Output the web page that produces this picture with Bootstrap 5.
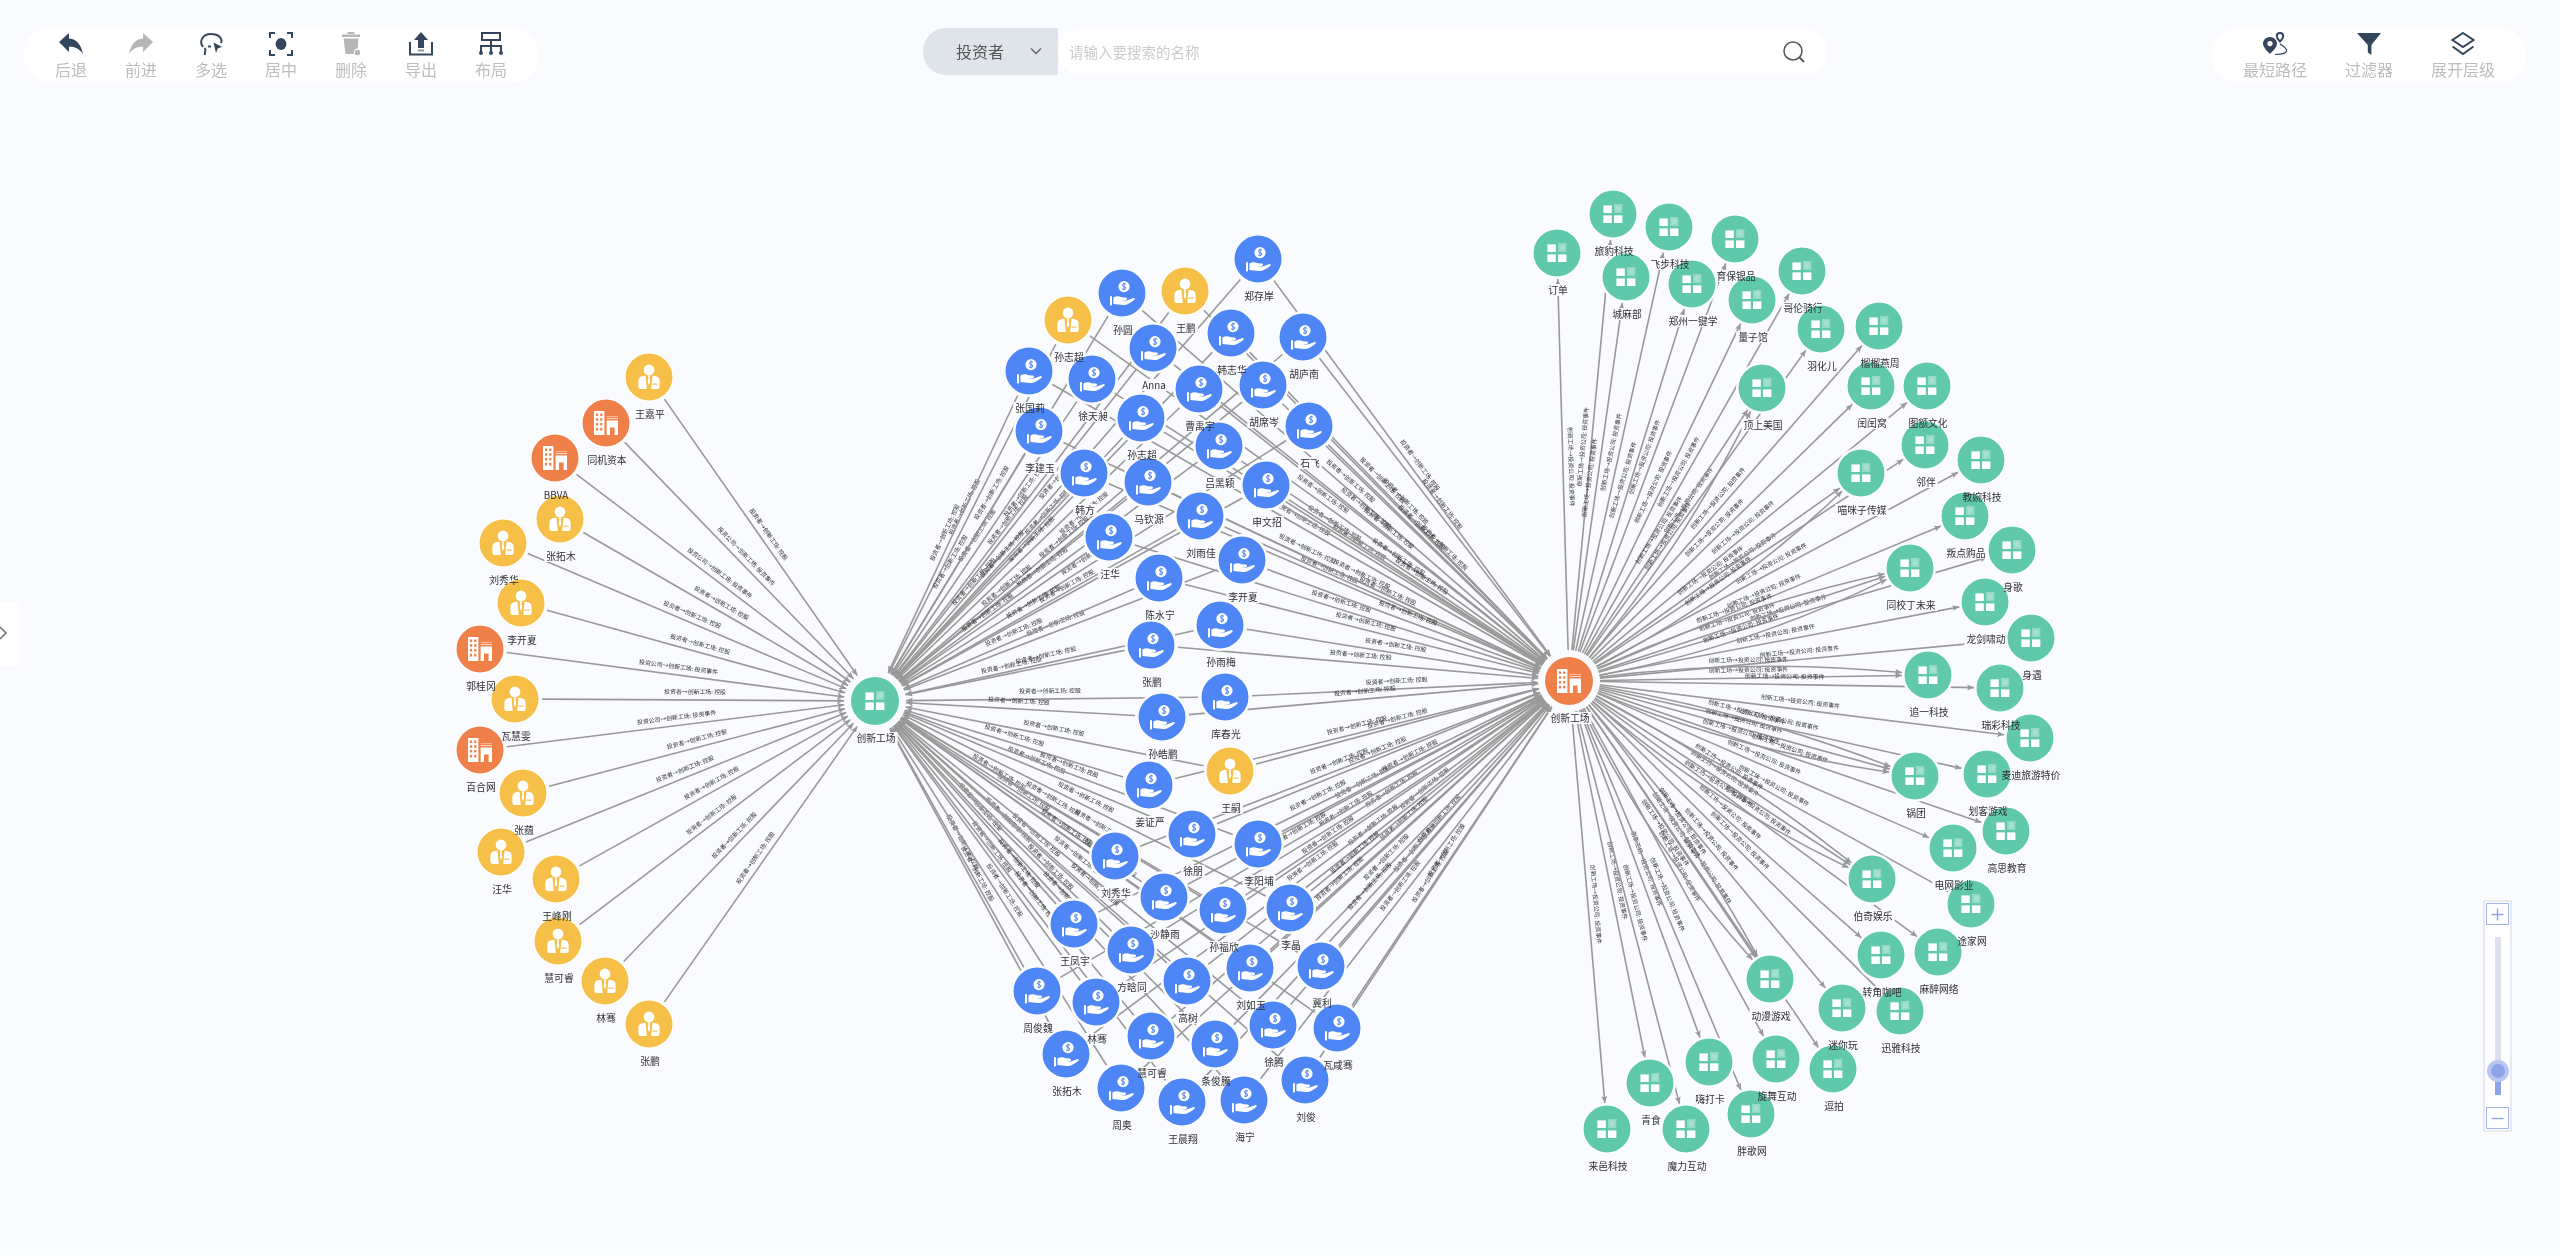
<!DOCTYPE html>
<html lang="zh-CN">

<head>
    <meta charset="UTF-8">
    <meta name="viewport" content="width=device-width, initial-scale=1.0">
    <title>图谱</title>
    <link href="https://cdn.jsdelivr.net/npm/bootstrap@5.3.0/dist/css/bootstrap.min.css" rel="stylesheet">
    <style>
        html, body { height: 100%; }
        body {
            background: #f9fbff;
            overflow: hidden;
            font-family: "Noto Sans CJK SC", "Liberation Sans", sans-serif;
        }

        .page-wrap { position: relative; width: 2560px; height: 1255px; filter: blur(.6px); }

        .graph-canvas { position: absolute; left: 0; top: 0; width: 2560px; height: 1255px; }
        .node-name { font-size: 9.8px; fill: #303030; text-anchor: middle; }
        .edge-text { font-size: 5.9px; fill: #303030; text-anchor: middle; }
        .edge-line { fill: none; stroke: #999; stroke-width: 1.6; }
        .node-halo { fill: #f9fbff; }
        .name-mask { fill: #f9fbff; }

        .top-bar { position: relative; z-index: 2; padding: 27px 33px 0 23px; }
        .tool-pill { height: 56px; background: #fff; border-radius: 28px; }
        .tool-pill-left { padding: 0 13px; }
        .tool-pill-right { padding: 0 17px; }
        .tool-item { width: 70px; padding-top: 5px; color: #bdbdbd; font-size: 16px; line-height: 20px; }
        .tool-pill-right .tool-item { width: 94px; }
        .tool-item svg { display: block; width: 24px; height: 24px; margin-bottom: 3px; }
        .ic-on { fill: #34465c; stroke: none; }
        .ic-off { fill: #b6b6b6; stroke: none; }
        .ic-line { fill: none; stroke: #34465c; stroke-width: 2; }

        .search-box { width: 904px; height: 47px; margin-top: 1px; }
        .search-type {
            width: 135px;
            background: #dfe3ea;
            border-radius: 23px 0 0 23px;
            color: #555;
            font-size: 16px;
            padding-left: 33px;
            padding-bottom: 2px;
        }
        .search-type svg { width: 12px; height: 12px; margin-left: 26px; }
        .search-main { background: #fff; border-radius: 23px; padding: 0 21px 0 11px; }
        .search-main .form-control {
            border: 0;
            background: transparent;
            box-shadow: none;
            padding: 0;
            font-size: 14.5px;
        }
        .search-main .form-control::placeholder { color: #cbcbcb; }
        .search-main svg { width: 24px; height: 24px; flex: none; }

        .side-handle {
            position: absolute;
            left: 0;
            top: 602px;
            width: 20px;
            height: 64px;
            background: #fff;
        }
        .side-handle svg { width: 8px; height: 14px; margin-top: 24px; display: block; }

        .zoom-box {
            position: absolute;
            left: 2483px;
            top: 900px;
            width: 29px;
            height: 232px;
            background: #fff;
            border: 2px solid #e8eaf1;
            padding: 1px;
        }
        .zoom-btn {
            width: 23px;
            height: 22px;
            flex: none;
            border: 1.5px solid #a3b3ee;
            color: #8ea3e8;
            background: #fff;
        }
        .zoom-btn svg { width: 15px; height: 15px; }
        .zoom-track { position: relative; width: 6px; height: 160px; margin: 12px 0 12px; background: #dde0ea; }
        .zoom-fill { position: absolute; left: 0; right: 0; bottom: 0; background: #8ea3e8; }
        .zoom-knob {
            position: absolute;
            left: -4px;
            width: 14px;
            height: 14px;
            border-radius: 50%;
            background: #8ea3e8;
            box-shadow: 0 0 0 4px #b9c6f1;
        }
    </style>
</head>

<body>
    <div class="page-wrap">
        <svg class="graph-canvas" id="graph" viewBox="0 0 2560 1255" xmlns="http://www.w3.org/2000/svg">
            <defs>
                <marker id="arrow" markerUnits="userSpaceOnUse" markerWidth="8" markerHeight="7" refX="7" refY="3"
                    orient="auto">
                    <path d="M0 0L7 3L0 6L1.5 3Z" fill="#999"></path>
                </marker>
                <g id="ic-person" fill="#fff">
                    <circle cx="0" cy="-7" r="5.4"></circle>
                    <path d="M-3.6-1.6L-8-.4Q-10.6.6-10.6 4.4L-10.6 10Q-10.6 12-8.4 12L-2.2 12Z"></path>
                    <path d="M3.6-1.6L8-.4Q10.6.6 10.6 4.4L10.6 10Q10.6 12 8.4 12L2.2 12Z"></path>
                    <path d="M-1.1-1.6L1.1-1.6L.7 1L1.3 5L0 8L-1.3 5L-.7 1Z"></path>
                    <rect x="3.4" y="6.6" width="5.2" height="1.1" fill="#f5bf48"></rect>
                </g>
                <g id="ic-hand" fill="#fff">
                    <circle cx="2" cy="-6.4" r="5.6"></circle>
                    <path d="M4-8.8C2.8-9.8.4-9.4.4-7.8C.4-6 3.8-6.8 3.8-5C3.8-3.4 1.2-3.2 0-4.2M2-10.4L2-2.6" fill="none"
                        stroke="#4f86f5" stroke-width="1"></path>
                    <rect x="-12" y="3.2" width="2" height="9.2"></rect>
                    <path d="M-8.6 4.6C-5.8 2.8-3 2.8-.4 4.2L3.8 4.6C5.6 4.8 5.6 7 3.8 7L-1.4 7.2L4.6 7.6L11 5.2C12.6 4.6 13.4 6 12.2 7C8.4 10 5 12.2 1 12L-8.6 11Z"></path>
                </g>
                <g id="ic-firm" fill="#fff">
                    <path fill-rule="evenodd" d="M-12-12L-1.6-12L-1.6 12L-12 12ZM-10-9.6L-10-7L-7.8-7L-7.8-9.6ZM-5.8-9.6L-5.8-7L-3.6-7L-3.6-9.6ZM-10-4.8L-10-2.2L-7.8-2.2L-7.8-4.8ZM-5.8-4.8L-5.8-2.2L-3.6-2.2L-3.6-4.8ZM-10 0L-10 2.6L-7.8 2.6L-7.8 0ZM-5.8 0L-5.8 2.6L-3.6 2.6L-3.6 0ZM-10 4.8L-10 7.4L-7.8 7.4L-7.8 4.8ZM-5.8 4.8L-5.8 7.4L-3.6 7.4L-3.6 4.8Z"></path>
                    <path d="M.6-2.6L12-2.6L12 12L8.6 12L8.6 4.4L4 4.4L4 12L.6 12Z"></path>
                    <rect x=".6" y="-5" width="11.4" height="1" opacity=".7"></rect>
                    <rect x=".6" y="-7" width="11.4" height="1" opacity=".45"></rect>
                </g>
                <g id="ic-tiles" fill="#fff">
                    <rect x="-9.6" y="-8.6" width="8.4" height="7.6"></rect>
                    <rect x="1" y="-10" width="8.4" height="9" fill="#fff" fill-opacity=".3"></rect>
                    <rect x="2.6" y="-8.4" width="5.2" height="5.8" fill="#fff" fill-opacity=".2"></rect>
                    <rect x="-9.6" y="1.4" width="8.4" height="7.6"></rect>
                    <rect x="1" y="1.4" width="8.4" height="7.6"></rect>
                </g>
            </defs>
        </svg>

        <div class="top-bar d-flex justify-content-between align-items-start">
            <div class="tool-pill tool-pill-left d-flex">
                <div class="tool-item d-flex flex-column align-items-center">
                    <svg viewBox="0 0 24 24"><path class="ic-on" d="M0 10L10 1L10 6.6C18 7 22 13 24 22C20 16.6 16 14.8 10 14.8L10 20Z"></path></svg>
                    <span>后退</span>
                </div>
                <div class="tool-item d-flex flex-column align-items-center">
                    <svg viewBox="0 0 24 24"><path class="ic-off" d="M24 10L14 1L14 6.6C6 7 2 13 0 22C4 16.6 8 14.8 14 14.8L14 20Z"></path></svg>
                    <span>前进</span>
                </div>
                <div class="tool-item d-flex flex-column align-items-center">
                    <svg viewBox="0 0 24 24">
                        <path class="ic-line" d="M4 15C0 10 3 2 12 2C20 2 24 7 22 11"></path>
                        <path class="ic-line" d="M5.5 16C8 18 5 20 6 23M9 14.5L12 14.5"></path>
                        <path class="ic-on" d="M14.5 10.5L23 15L18.6 16.4L17 21Z"></path>
                    </svg>
                    <span>多选</span>
                </div>
                <div class="tool-item d-flex flex-column align-items-center">
                    <svg viewBox="0 0 24 24">
                        <path class="ic-line" d="M1 6L1 1L6 1M18 1L23 1L23 6M23 18L23 23L18 23M6 23L1 23L1 18"></path>
                        <ellipse class="ic-on" cx="12" cy="12" rx="5.4" ry="6"></ellipse>
                    </svg>
                    <span>居中</span>
                </div>
                <div class="tool-item d-flex flex-column align-items-center">
                    <svg viewBox="0 0 24 24">
                        <path class="ic-off" d="M3 2.5L21 2.5L21 5L3 5ZM8.5 0L15.5 0L15.5 2L8.5 2ZM4.5 6.5L19.5 6.5L18.8 16.5C15.5 16.5 14.5 19 15 22L6.6 22Z"></path>
                        <circle class="ic-off" cx="18.5" cy="20.5" r="2.7"></circle>
                    </svg>
                    <span>删除</span>
                </div>
                <div class="tool-item d-flex flex-column align-items-center">
                    <svg viewBox="0 0 24 24">
                        <path class="ic-on" d="M12 0L19 8L15 8L15 16L9 16L9 8L5 8Z"></path>
                        <path class="ic-line" d="M1 10L1 22.5L23 22.5L23 10"></path>
                        <rect x="9" y="17.5" width="6" height="2" fill="#8d99a8"></rect>
                    </svg>
                    <span>导出</span>
                </div>
                <div class="tool-item d-flex flex-column align-items-center">
                    <svg viewBox="0 0 24 24">
                        <path class="ic-line" d="M3 1L21 1L21 8L3 8ZM12 8L12 14M2 21L2 14L22 14L22 21M12 14L12 21"></path>
                        <circle class="ic-on" cx="2" cy="21" r="2"></circle>
                        <circle class="ic-on" cx="12" cy="21" r="2"></circle>
                        <circle class="ic-on" cx="22" cy="21" r="2"></circle>
                    </svg>
                    <span>布局</span>
                </div>
            </div>

            <div class="search-box d-flex">
                <div class="search-type d-flex align-items-center">
                    投资者
                    <svg viewBox="0 0 12 12"><path d="M1 3.5L6 8.5L11 3.5" fill="none" stroke="#666" stroke-width="1.4"></path></svg>
                </div>
                <div class="search-main d-flex flex-grow-1 align-items-center">
                    <input class="form-control" type="text" placeholder="请输入要搜索的名称">
                    <svg viewBox="0 0 24 24">
                        <circle cx="11" cy="11" r="9" fill="none" stroke="#555" stroke-width="1.5"></circle>
                        <path d="M17.5 17.5L22 22" stroke="#555" stroke-width="1.8"></path>
                    </svg>
                </div>
            </div>

            <div class="tool-pill tool-pill-right d-flex">
                <div class="tool-item d-flex flex-column align-items-center">
                    <svg viewBox="0 0 24 24">
                        <path class="ic-on" fill-rule="evenodd" d="M7 5C3 5 0 8 0 11.5C0 15 4 19 7 22C10 19 14 15 14 11.5C14 8 11 5 7 5ZM7 9A2.6 2.6 0 1 1 7 14.2A2.6 2.6 0 1 1 7 9Z"></path>
                        <path class="ic-line" d="M17 1C15 1 13.8 2.6 13.8 4.2C13.8 6.2 15.6 8 17 9.6C18.4 8 20.2 6.2 20.2 4.2C20.2 2.6 19 1 17 1Z" stroke-width="1.6"></path>
                        <path d="M17 12C19 14 23 15 23.5 18C24 21 20 22.5 12 22.5" fill="none" stroke="#34465c" stroke-width="1.2"></path>
                    </svg>
                    <span>最短路径</span>
                </div>
                <div class="tool-item d-flex flex-column align-items-center">
                    <svg viewBox="0 0 24 24"><path class="ic-on" d="M0 1L24 1L14.4 13L14.4 23L10.8 20.6L10.8 13Z"></path></svg>
                    <span>过滤器</span>
                </div>
                <div class="tool-item d-flex flex-column align-items-center">
                    <svg viewBox="0 0 24 24">
                        <path class="ic-line" d="M12 1L22.5 8L12 15L1.5 8Z"></path>
                        <path class="ic-line" d="M1.5 14.5L12 22L22.5 14.5"></path>
                    </svg>
                    <span>展开层级</span>
                </div>
            </div>
        </div>

        <div class="side-handle">
            <svg viewBox="0 0 8 14"><path d="M0 1L6 7L0 13" fill="none" stroke="#777" stroke-width="1.6"></path></svg>
        </div>

        <div class="zoom-box d-flex flex-column align-items-center">
            <div class="zoom-btn d-flex align-items-center justify-content-center">
                <svg viewBox="0 0 15 15"><path d="M7.5 1.5L7.5 13.5M1.5 7.5L13.5 7.5" stroke="#8ea3e8" stroke-width="1.4"></path></svg>
            </div>
            <div class="zoom-track">
                <div class="zoom-fill" style="height: 24px"></div>
                <div class="zoom-knob" style="bottom: 17px"></div>
            </div>
            <div class="zoom-btn d-flex align-items-center justify-content-center">
                <svg viewBox="0 0 15 15"><path d="M1.5 7.5L13.5 7.5" stroke="#8ea3e8" stroke-width="1.4"></path></svg>
            </div>
        </div>
    </div>

    <script src="https://cdn.jsdelivr.net/npm/bootstrap@5.3.0/dist/js/bootstrap.bundle.min.js"></script>

    <script>
        const hubA = { name: '创新工场', x: 875, y: 701, kind: 'g', r: 24 };
        const hubB = { name: '创新工场', x: 1569, y: 681, kind: 'o', r: 24 };

        // kind: y yellow person, o orange firm, b blue investor, g green startup
        const leftNodes = [
            ['王嘉平', 649, 377, 'y'], ['同机资本', 606, 423, 'o'], ['BBVA', 555, 458, 'o'], ['张拓木', 560, 519, 'y'],
            ['刘秀华', 503, 543, 'y'], ['李开夏', 521, 603, 'y'], ['郭桂冈', 480, 649, 'o'], ['瓦慧雯', 515, 699, 'y'],
            ['百合网', 480, 750, 'o'], ['张蕴', 523, 793, 'y'], ['汪华', 501, 852, 'y'], ['王峰刚', 556, 879, 'y'],
            ['慧可睿', 558, 941, 'y'], ['林骞', 605, 981, 'y'], ['张鹏', 649, 1024, 'y']
        ];

        const midNodes = [
            ['郑存岸', 1258, 259, 'b'], ['胡庐南', 1303, 337, 'b'], ['韩志华', 1231, 333, 'b'], ['王鹏', 1185, 291, 'y'],
            ['孙圆', 1122, 293, 'b'], ['孙志超', 1068, 320, 'y'], ['Anna', 1153, 348, 'b'], ['张国莉', 1029, 371, 'b'],
            ['徐天昶', 1092, 379, 'b'], ['曹禹宇', 1199, 389, 'b'], ['胡席岑', 1263, 385, 'b'], ['石飞', 1309, 426, 'b'],
            ['孙志超', 1141, 418, 'b'], ['李建玉', 1039, 431, 'b'], ['吕黑颖', 1219, 446, 'b'], ['韩方', 1084, 473, 'b'],
            ['马钦源', 1148, 482, 'b'], ['申文招', 1266, 485, 'b'], ['刘雨佳', 1200, 516, 'b'], ['汪华', 1109, 537, 'b'],
            ['李开夏', 1242, 560, 'b'], ['陈水宁', 1159, 578, 'b'], ['孙雨梅', 1220, 625, 'b'], ['张鹏', 1151, 645, 'b'],
            ['库春光', 1225, 697, 'b'], ['孙皓鹏', 1162, 717, 'b'], ['王嗣', 1230, 771, 'y'], ['姜证严', 1149, 785, 'b'],
            ['徐朋', 1192, 834, 'b'], ['李阳埔', 1258, 844, 'b'], ['刘秀华', 1115, 856, 'b'], ['沙静雨', 1164, 897, 'b'],
            ['孙福欣', 1223, 910, 'b'], ['李晶', 1290, 908, 'b'], ['王凤宇', 1074, 924, 'b'], ['方晗同', 1131, 950, 'b'],
            ['高树', 1187, 981, 'b'], ['刘如玉', 1250, 968, 'b'], ['冀利', 1321, 966, 'b'], ['周俊魏', 1037, 991, 'b'],
            ['林骞', 1096, 1002, 'b'], ['慧可睿', 1151, 1036, 'b'], ['徐腾', 1273, 1025, 'b'], ['瓦咸骞', 1337, 1028, 'b'],
            ['张拓木', 1066, 1054, 'b'], ['条俊騰', 1215, 1044, 'b'], ['刘俊', 1305, 1080, 'b'], ['周奥', 1121, 1088, 'b'],
            ['王晨翔', 1182, 1102, 'b'], ['海宁', 1244, 1100, 'b']
        ];

        const rightNodes = [
            ['订单', 1557, 253], ['旅豹科技', 1613, 214], ['飞步科技', 1669, 227], ['育保银品', 1735, 239],
            ['城麻部', 1626, 277], ['郑州一键学', 1692, 284], ['哥伦骑行', 1802, 271], ['量子馆', 1752, 300],
            ['羽化儿', 1821, 329], ['榴榴燕周', 1879, 326], ['顶上美国', 1762, 388], ['闰闰窝', 1871, 386],
            ['图额文化', 1927, 386], ['邻伴', 1925, 445], ['教婉科技', 1981, 460], ['喵咪子传媒', 1861, 473],
            ['叛点购品', 1965, 516], ['身歌', 2012, 550], ['同校丁未来', 1910, 568], ['龙剑啸动', 1985, 602],
            ['身遇', 2031, 638], ['追一科技', 1928, 675], ['瑞彩科技', 2000, 688], ['麦迪旅游特价', 2030, 738],
            ['划客游戏', 1987, 774], ['锅团', 1915, 776], ['高思教育', 2006, 831], ['电网影业', 1953, 848],
            ['伯奇娱乐', 1872, 879], ['途家网', 1971, 904], ['转角咖吧', 1881, 955], ['麻醉网络', 1938, 952],
            ['动漫游戏', 1770, 979], ['迷你玩', 1842, 1008], ['迅雅科技', 1900, 1011], ['旋舞互动', 1776, 1059],
            ['逗拍', 1833, 1069], ['嗨打卡', 1709, 1062], ['青食', 1650, 1083], ['胖歌网', 1751, 1114],
            ['来邑科技', 1607, 1129], ['魔力互动', 1686, 1129]
        ].map(n => [n[0], n[1], n[2], 'g']);

        // extra bent links from the right hub, [target name, bend]
        const bentLinks = [
            ['顶上美国', 22], ['喵咪子传媒', 26], ['同校丁未来', 24], ['同校丁未来', -18], ['追一科技', -20],
            ['锅团', 22], ['锅团', -18], ['伯奇娱乐', 24], ['伯奇娱乐', -16], ['动漫游戏', 26], ['动漫游戏', -16]
        ];

        const colors = { y: '#f5bf48', o: '#f08049', b: '#4f86f5', g: '#60c9ab' };
        const icons = { y: 'ic-person', o: 'ic-firm', b: 'ic-hand', g: 'ic-tiles' };

        const NS = 'http://www.w3.org/2000/svg';
        const graph = document.getElementById('graph');

        function el(tag, attrs, text) {
            const e = document.createElementNS(NS, tag);
            Object.keys(attrs).forEach(k => e.setAttribute(k, attrs[k]));
            if (text) e.textContent = text;
            graph.appendChild(e);
            return e;
        }

        function toNode(n) {
            return { name: n[0], x: n[1], y: n[2], kind: n[3], r: 23.5 };
        }

        function trim(p, q, len) {
            const d = Math.hypot(q.x - p.x, q.y - p.y);
            return { x: p.x + (q.x - p.x) * len / d, y: p.y + (q.y - p.y) * len / d };
        }

        function drawEdge(a, b, label, bend, gapA, gapB) {
            const mid = { x: (a.x + b.x) / 2, y: (a.y + b.y) / 2 };
            const len = Math.hypot(b.x - a.x, b.y - a.y);
            const c = { x: mid.x - (b.y - a.y) / len * bend, y: mid.y + (b.x - a.x) / len * bend };
            const s = trim(a, c, gapA);
            const t = trim(b, c, gapB);
            el('path', {
                class: 'edge-line',
                d: `M${s.x} ${s.y}Q${c.x} ${c.y} ${t.x} ${t.y}`,
                'marker-end': 'url(#arrow)'
            });
            const lx = (a.x + 2 * c.x + b.x) / 4;
            const ly = (a.y + 2 * c.y + b.y) / 4;
            let ang = Math.atan2(b.y - a.y, b.x - a.x) * 180 / Math.PI;
            if (ang > 90) ang -= 180;
            if (ang < -90) ang += 180;
            el('text', { class: 'edge-text', transform: `translate(${lx} ${ly}) rotate(${ang})`, y: -6 }, label);
        }

        const left = leftNodes.map(toNode);
        const mid = midNodes.map(toNode);
        const right = rightNodes.map(toNode);

        left.forEach(n => {
            const label = n.kind === 'o' ? '投资公司→创新工场: 投资事件' : '投资者→创新工场: 控股';
            drawEdge(n, hubA, label, 0, 27, 31);
        });
        mid.forEach(n => {
            const label = n.kind === 'o' ? '投资公司→创新工场: 投资事件' : '投资者→创新工场: 控股';
            drawEdge(n, hubA, label, 0, 27, 31);
            drawEdge(n, hubB, label, 0, 27, 31);
        });
        right.forEach(n => drawEdge(hubB, n, '创新工场→投资公司: 投资事件', 0, 31, 26));
        bentLinks.forEach(link => {
            const n = right.find(item => item.name === link[0]);
            drawEdge(hubB, n, '创新工场→投资公司: 投资事件', link[1], 31, 26);
        });

        const all = left.concat(mid, right, [hubA, hubB]);

        // halo and name masks go under every node, so lines stop short of them
        all.forEach(n => {
            el('circle', { class: 'node-halo', cx: n.x, cy: n.y, r: n.r + 2.5 });
        });
        all.forEach(n => {
            const w = n.name.length * 9.8 + 4;
            el('rect', { class: 'name-mask', x: n.x + 1 - w / 2, y: n.y + 31, width: w, height: 12 });
        });
        all.forEach(n => {
            el('circle', { cx: n.x, cy: n.y, r: n.r + 1, fill: '#fff' });
            el('circle', { cx: n.x, cy: n.y, r: n.r, fill: colors[n.kind] });
            el('use', { href: '#' + icons[n.kind], x: n.x, y: n.y });
        });
        all.forEach(n => {
            el('text', { class: 'node-name', x: n.x + 1, y: n.y + 40.5 }, n.name);
        });
    </script>
</body>

</html>
